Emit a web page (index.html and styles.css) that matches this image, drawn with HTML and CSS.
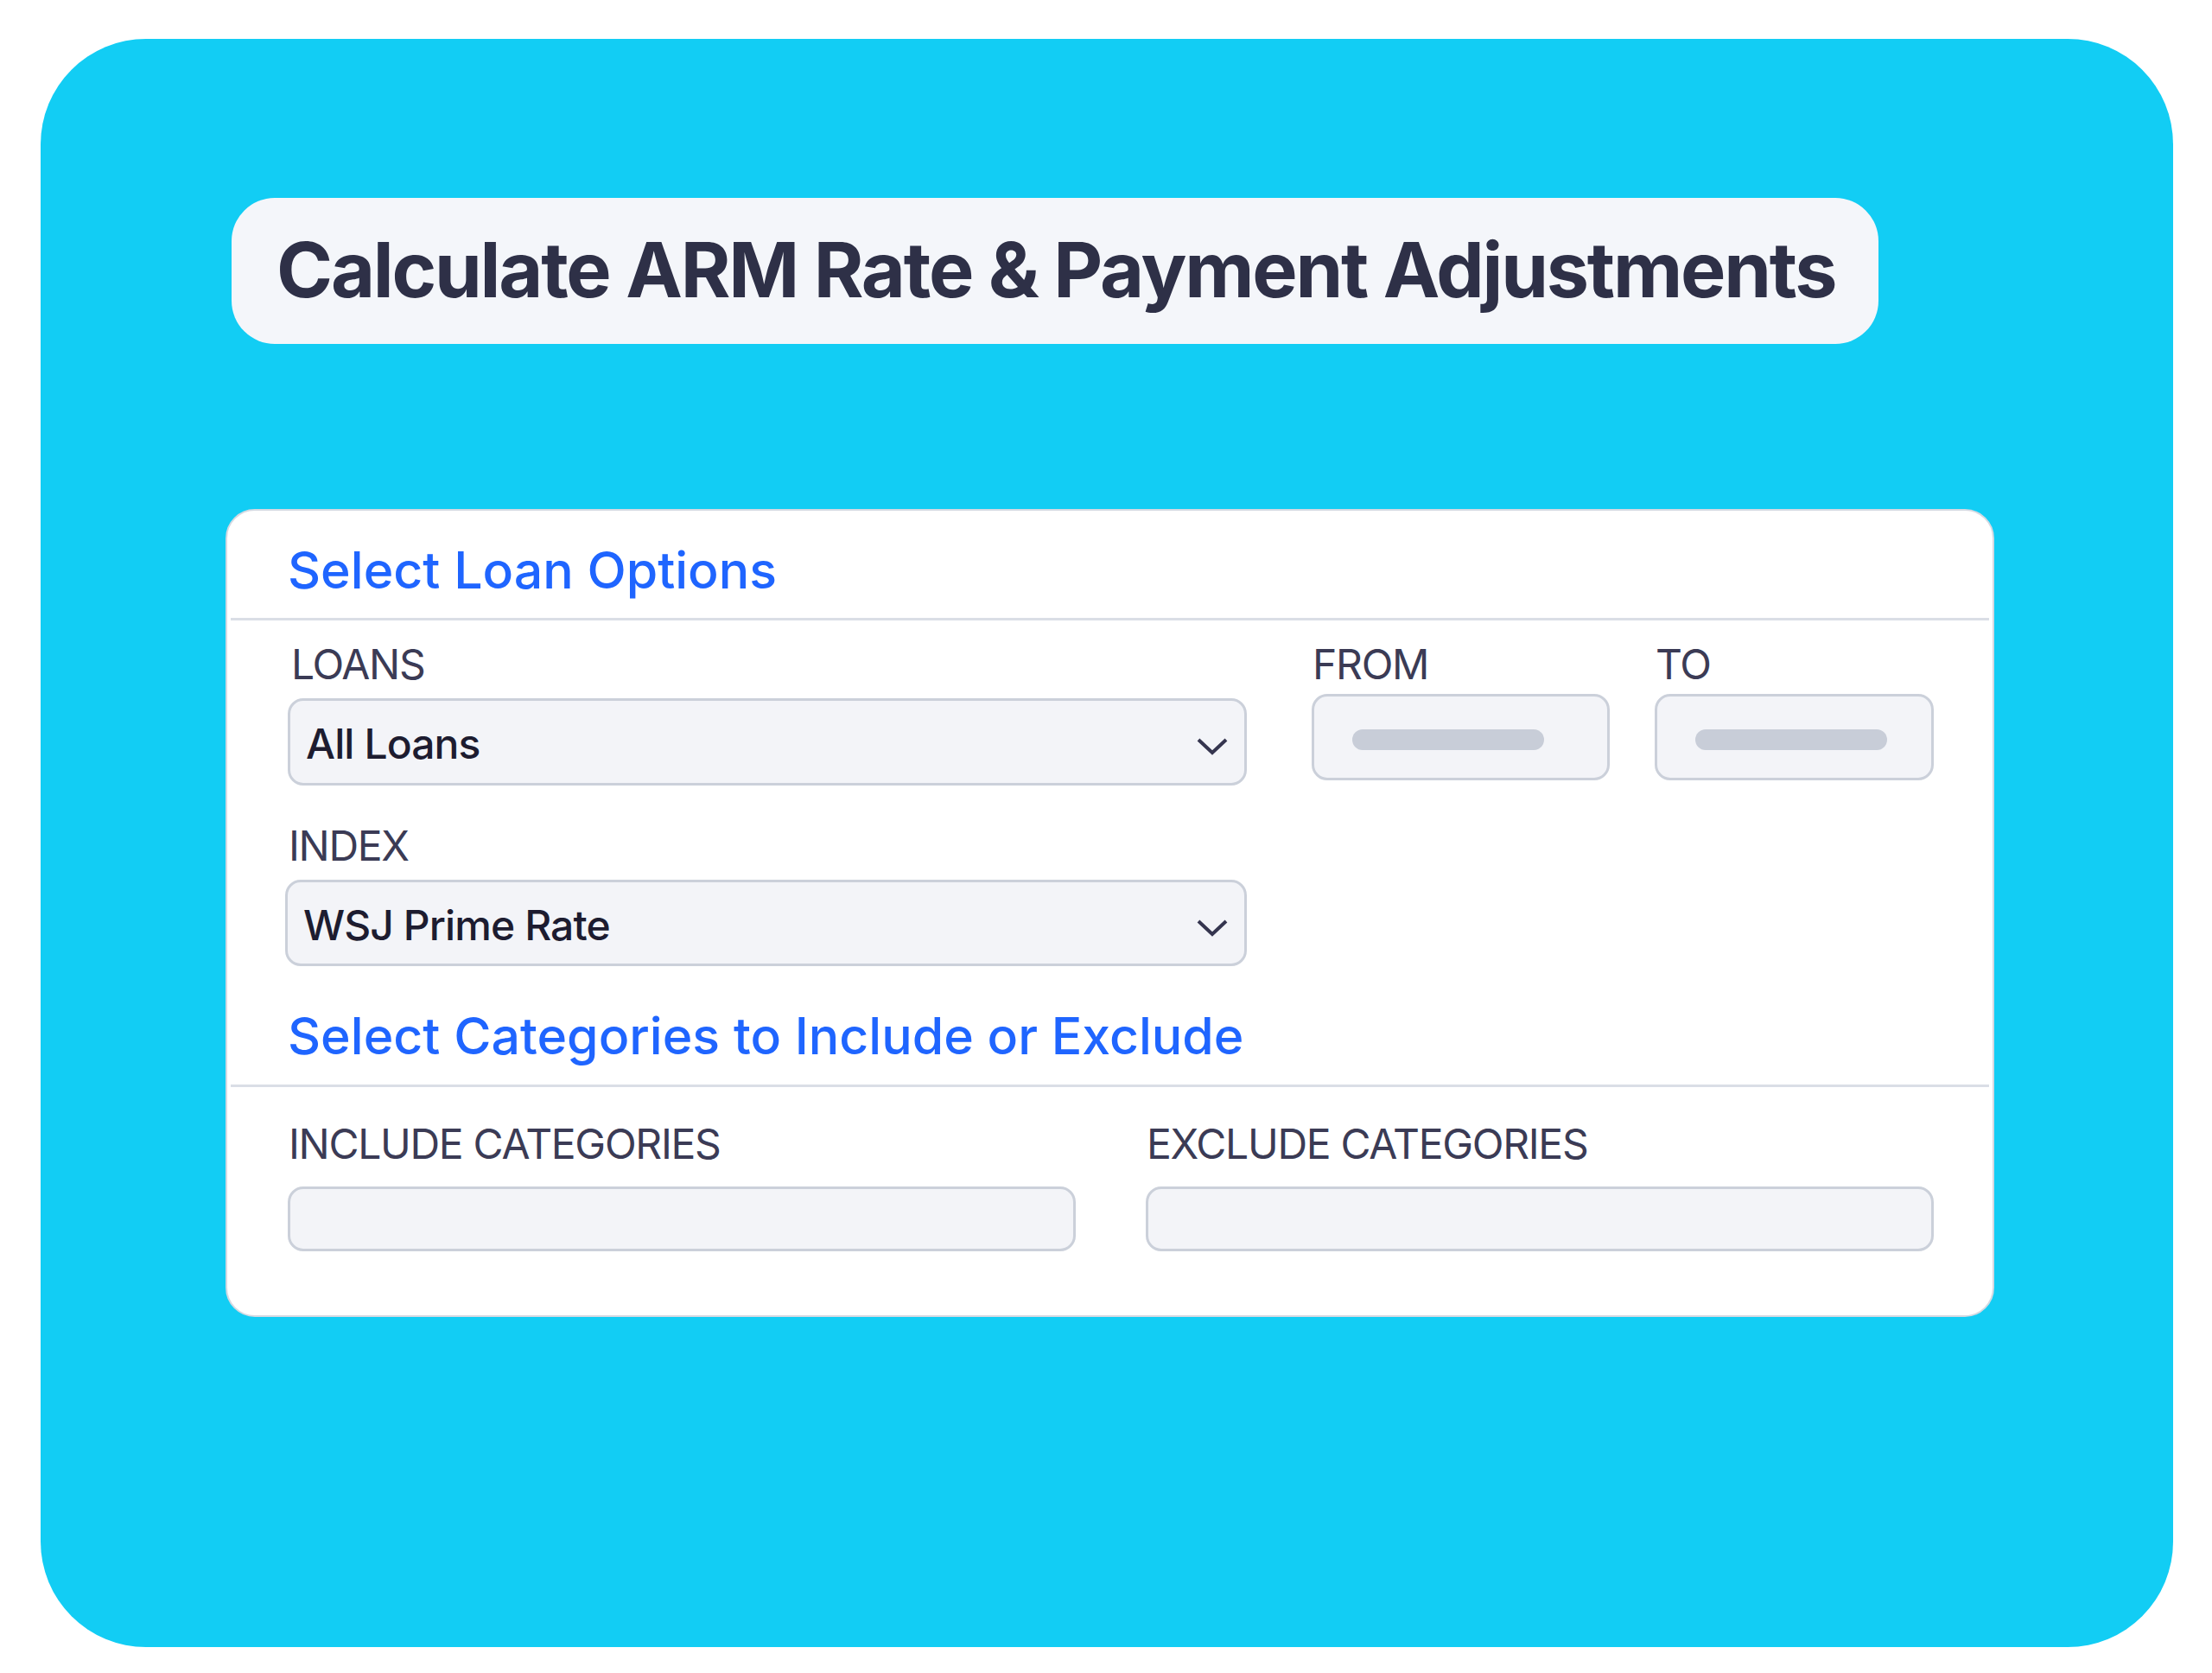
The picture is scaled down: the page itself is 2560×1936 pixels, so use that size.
FILE: index.html
```html
<!DOCTYPE html>
<html lang="en">
<head>
    <meta charset="UTF-8">
    <meta name="viewport" content="width=device-width, initial-scale=1.0">
    <title>ARM Rate Adjustments</title>
    <link rel="stylesheet" href="styles.css">
</head>
<body>
    <div class="frame">
        <h1 class="headline">Calculate ARM Rate &amp; Payment Adjustments</h1>

        <form class="card" action="">
            <h2 class="card-title">Select Loan Options</h2>
            <div class="divider"></div>

            <div class="row">
                <div class="field field-wide">
                    <label class="label label-loans" for="loans">LOANS</label>
                    <div class="select" id="loans">
                        <span class="select-value">All Loans</span>
                        <svg class="chevron" width="36" height="22" viewBox="0 0 36 22">
                            <path d="M2 3 L18 18 L34 3" fill="none" stroke="#35354f" stroke-width="4"/>
                        </svg>
                    </div>
                </div>
                <div class="field field-from">
                    <label class="label" for="from">FROM</label>
                    <div class="box" id="from"><span class="bar"></span></div>
                </div>
                <div class="field field-to">
                    <label class="label" for="to">TO</label>
                    <div class="box" id="to"><span class="bar"></span></div>
                </div>
            </div>

            <div class="row row-index">
                <div class="field field-wide">
                    <label class="label" for="index">INDEX</label>
                    <div class="select select-index" id="index">
                        <span class="select-value">WSJ Prime Rate</span>
                        <svg class="chevron" width="36" height="22" viewBox="0 0 36 22">
                            <path d="M2 3 L18 18 L34 3" fill="none" stroke="#35354f" stroke-width="4"/>
                        </svg>
                    </div>
                </div>
            </div>

            <h2 class="card-title card-title-second">Select Categories to Include or Exclude</h2>
            <div class="divider divider-second"></div>

            <div class="row row-categories">
                <div class="field field-half">
                    <label class="label" for="include">INCLUDE CATEGORIES</label>
                    <div class="input" id="include"></div>
                </div>
                <div class="field field-half">
                    <label class="label" for="exclude">EXCLUDE CATEGORIES</label>
                    <div class="input" id="exclude"></div>
                </div>
            </div>
        </form>
    </div>
</body>
</html>
```

FILE: styles.css
```css
body {
    font-family: Inter, "Noto Sans", sans-serif;
    background-color: #ffffff;
    margin: 0;
    padding: 45px 45px 30px 47px;
}

.frame {
    height: 1861px;
    box-sizing: border-box;
    background-color: #12cdf4;
    border-radius: 122px;
    padding: 184px 0 0 214px;
}

.headline {
    display: inline-block;
    margin: 0 0 0 7px;
    padding: 31px 50px 33px 52px;
    background-color: #f4f6fa;
    border-radius: 50px;
    color: #2e3047;
    font-size: 88px;
    line-height: 105px;
    font-weight: 700;
    letter-spacing: -2.2px;
}

.card {
    display: block;
    width: 2047px;
    box-sizing: border-box;
    margin-top: 191px;
    padding: 33px 0 74px;
    background-color: #ffffff;
    border: 2px solid #d5d9e2;
    border-radius: 34px;
}

.card-title {
    margin: 0;
    padding-left: 70px;
    color: #1f65ff;
    font-size: 59px;
    line-height: 72px;
    font-weight: 500;
}

.card-title-second {
    margin-top: 45px;
}

.divider {
    height: 3px;
    margin: 19px 4px 0;
    background-color: #dadee6;
}

.divider-second {
    margin-top: 20px;
}

.row {
    display: flex;
    padding: 0 68px 0 70px;
    margin-top: 22px;
}

.row-index {
    margin-top: 41px;
}

.row-categories {
    margin-top: 37px;
    gap: 81px;
}

.field-wide {
    width: 1110px;
}

.field-from {
    width: 345px;
    margin-left: 75px;
}

.field-to {
    width: 323px;
    margin-left: 52px;
}

.field-half {
    flex: 1;
}

.label {
    display: block;
    padding-left: 1px;
    color: #3b3b55;
    font-size: 48px;
    line-height: 58px;
    font-weight: 400;
    letter-spacing: -1.3px;
}

.label-loans {
    padding-left: 4px;
}

.select {
    display: flex;
    align-items: center;
    height: 101px;
    box-sizing: border-box;
    margin-top: 10px;
    padding: 5px 19px 0 18px;
    background-color: #f3f4f8;
    border: 3px solid #cbd0da;
    border-radius: 18px;
}

.select-index {
    height: 100px;
    margin-left: -3px;
}

.select-value {
    color: #1d1c30;
    font-size: 48px;
    line-height: 58px;
    font-weight: 500;
    letter-spacing: -0.9px;
}

.chevron {
    margin-left: auto;
    margin-top: 6px;
}

.box {
    display: flex;
    align-items: center;
    height: 100px;
    box-sizing: border-box;
    margin-top: 5px;
    padding: 6px 0 0 44px;
    background-color: #f3f4f8;
    border: 3px solid #cbd0da;
    border-radius: 18px;
}

.bar {
    width: 222px;
    height: 24px;
    background-color: #c8cdd8;
    border-radius: 12px;
}

.input {
    height: 75px;
    box-sizing: border-box;
    margin-top: 20px;
    background-color: #f3f4f8;
    border: 3px solid #cbd0da;
    border-radius: 18px;
}
```
